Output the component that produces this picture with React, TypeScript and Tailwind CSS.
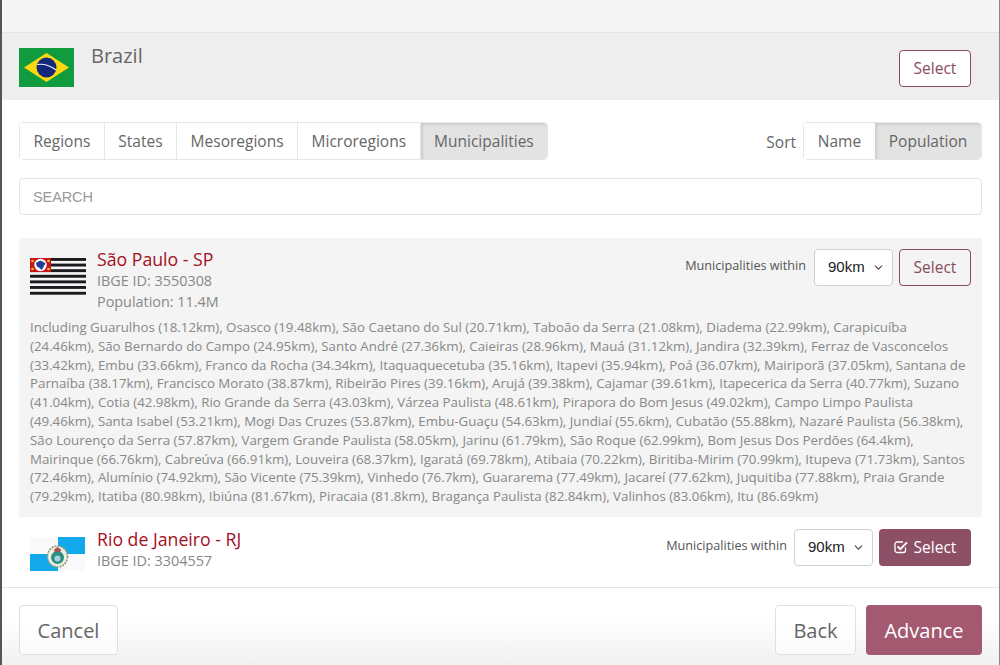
import { ChevronDown } from "lucide-react";

const tabs = ["Regions", "States", "Mesoregions", "Microregions", "Municipalities"];

const nearby =
  "Including Guarulhos (18.12km), Osasco (19.48km), São Caetano do Sul (20.71km), Taboão da Serra (21.08km), Diadema (22.99km), Carapicuíba (24.46km), São Bernardo do Campo (24.95km), Santo André (27.36km), Caieiras (28.96km), Mauá (31.12km), Jandira (32.39km), Ferraz de Vasconcelos (33.42km), Embu (33.66km), Franco da Rocha (34.34km), Itaquaquecetuba (35.16km), Itapevi (35.94km), Poá (36.07km), Mairiporã (37.05km), Santana de Parnaíba (38.17km), Francisco Morato (38.87km), Ribeirão Pires (39.16km), Arujá (39.38km), Cajamar (39.61km), Itapecerica da Serra (40.77km), Suzano (41.04km), Cotia (42.98km), Rio Grande da Serra (43.03km), Várzea Paulista (48.61km), Pirapora do Bom Jesus (49.02km), Campo Limpo Paulista (49.46km), Santa Isabel (53.21km), Mogi Das Cruzes (53.87km), Embu-Guaçu (54.63km), Jundiaí (55.6km), Cubatão (55.88km), Nazaré Paulista (56.38km), São Lourenço da Serra (57.87km), Vargem Grande Paulista (58.05km), Jarinu (61.79km), São Roque (62.99km), Bom Jesus Dos Perdões (64.4km), Mairinque (66.76km), Cabreúva (66.91km), Louveira (68.37km), Igaratá (69.78km), Atibaia (70.22km), Biritiba-Mirim (70.99km), Itupeva (71.73km), Santos (72.46km), Alumínio (74.92km), São Vicente (75.39km), Vinhedo (76.7km), Guararema (77.49km), Jacareí (77.62km), Juquitiba (77.88km), Praia Grande (79.29km), Itatiba (80.98km), Ibiúna (81.67km), Piracaia (81.8km), Bragança Paulista (82.84km), Valinhos (83.06km), Itu (86.69km)";

function BrazilFlag() {
  return (
    <svg width="55" height="39" viewBox="0 0 55 39" className="shrink-0">
      <rect width="55" height="39" fill="#0f9b3e" />
      <polygon points="5,19.5 27.5,5 50,19.5 27.5,34" fill="#fcd80f" />
      <circle cx="27.5" cy="19.5" r="10" fill="#13287a" />
      <path d="M18 16.5 Q28 15 37 22" stroke="#e8edf2" strokeWidth="1.2" fill="none" />
    </svg>
  );
}

function SaoPauloFlag() {
  const stripes = [0, 5.6, 11.2, 16.8, 22.4, 28, 33.8];
  return (
    <svg width="56" height="37" viewBox="0 0 56 37" className="shrink-0">
      {stripes.map((y) => (
        <rect key={y} y={y} width="56" height="2.9" fill="#1b1b1f" />
      ))}
      <rect width="21" height="14" fill="#c8121c" />
      <circle cx="10.5" cy="7" r="6.2" fill="#fff" />
      <path d="M6 4.8 L10.5 2.4 L15.5 5.2 L14 8 L11.8 12 L9.5 10 L6.8 8.2 Z" fill="#1f3f94" />
      <circle cx="2.5" cy="3" r="1.3" fill="#f5c518" />
      <circle cx="18.5" cy="3" r="1.3" fill="#f5c518" />
      <circle cx="2.5" cy="11" r="1.3" fill="#f5c518" />
      <circle cx="18.5" cy="11" r="1.3" fill="#f5c518" />
    </svg>
  );
}

function RioFlag() {
  return (
    <svg width="55" height="34" viewBox="0 0 55 34" className="shrink-0">
      <rect width="55" height="34" fill="#fafafa" />
      <rect x="28" width="27" height="17" fill="#12a8ec" />
      <rect y="17" width="28" height="17" fill="#12a8ec" />
      <ellipse cx="27.5" cy="19.5" rx="10" ry="10.5" fill="#eef0e6" stroke="#8f9c78" strokeWidth="1.6" strokeDasharray="2 1" />
      <circle cx="27.5" cy="20.5" r="6.5" fill="#2f8d7d" />
      <circle cx="27.5" cy="21.5" r="3" fill="#a6d6e6" />
      <path d="M23.5 13 L27.5 10 L31.5 13 L30 15 L25 15 Z" fill="#a9545c" />
    </svg>
  );
}

function CheckSquare() {
  return (
    <svg width="15" height="14" viewBox="0 0 15 14" fill="none" stroke="currentColor" className="shrink-0">
      <path d="M11.5 7.5 V10.5 A2 2 0 0 1 9.5 12.5 H3 A2 2 0 0 1 1 10.5 V4 A2 2 0 0 1 3 2 H9" strokeWidth="1.3" />
      <path d="M3.6 6.4 L6.3 9.1 L13 2.4" strokeWidth="2" />
    </svg>
  );
}

function DistanceSelect() {
  return (
    <div className="flex h-[37px] w-[79px] items-center justify-between rounded border border-[#d0d0d0] bg-white pr-[7px] pl-[13px] font-['Liberation_Sans',sans-serif] text-[15px] text-[#222]">
      90km
      <ChevronDown size={13} strokeWidth={2} className="text-[#444]" />
    </div>
  );
}

function OutlineSelect({ transparent }: { transparent?: boolean }) {
  return (
    <button
      className={`h-[37px] w-[72px] rounded border border-[#8a4a60] text-[15.5px] text-[#8a4a60] ${
        transparent ? "bg-transparent" : "bg-white"
      }`}
    >
      Select
    </button>
  );
}

export default function App() {
  return (
    <div className="flex h-[665px] w-[1000px] flex-col overflow-hidden border-r border-l-2 border-r-[#888] border-l-[#555] bg-white font-['Open_Sans',sans-serif] text-[#666]">
      <div className="h-[33px] shrink-0 border-b border-[#e3e3e3] bg-[#f5f5f5]" />

      <div className="flex h-[67px] shrink-0 items-start justify-between bg-[#eeeeee] pr-[28px] pl-[17px]">
        <div className="mt-[15px] flex items-start gap-[17px]">
          <BrazilFlag />
          <span className="-mt-[5px] text-[20px] leading-[26px] text-[#666]">Brazil</span>
        </div>
        <div className="mt-[17px]">
          <OutlineSelect />
        </div>
      </div>

      <div className="flex shrink-0 items-start justify-between pt-[22px] pr-[17px] pl-[17px]">
        <div className="flex h-[38px] rounded border border-[#e6e6e6] text-[15.5px]">
          {tabs.map((tab, i) => (
            <div
              key={tab}
              className={`flex items-center px-[13.5px] pt-[1px] ${
                i === tabs.length - 1
                  ? "rounded-r bg-[#e3e3e3] shadow-[inset_2px_2px_3px_rgba(0,0,0,0.1)]"
                  : "border-r border-[#e6e6e6] bg-white"
              }`}
            >
              {tab}
            </div>
          ))}
        </div>
        <div className="flex items-center gap-[7px]">
          <span className="mt-[4px] text-[15.5px]">Sort</span>
          <div className="flex h-[38px] rounded border border-[#e6e6e6] text-[15.5px]">
            <div className="flex w-[71px] items-center justify-center bg-white pt-[1px]">Name</div>
            <div className="flex w-[106px] items-center justify-center rounded-r bg-[#e3e3e3] pt-[1px] shadow-[inset_2px_2px_3px_rgba(0,0,0,0.1)]">
              Population
            </div>
          </div>
        </div>
      </div>

      <div className="mt-[18px] mr-[17px] ml-[17px] flex h-[37px] shrink-0 items-center rounded border border-[#e4e4e4] px-[13px] pt-[2px] font-['Liberation_Sans',sans-serif] text-[14.5px] tracking-[-0.1px] text-[#999]">
        SEARCH
      </div>

      <div className="min-h-0 flex-1 overflow-hidden pt-[23px]">
        <div className="mr-[17px] ml-[17px] bg-[#f3f4f3] px-[11px] pt-[11px] pb-[11px]">
          <div className="flex items-start justify-between">
            <div className="flex items-start gap-[11px]">
              <div className="mt-[9px]">
                <SaoPauloFlag />
              </div>
              <div>
                <div className="text-[17.7px] leading-[20px] text-[#a50e1d]">São Paulo - SP</div>
                <div className="mt-[2px] text-[14.4px] leading-[20px] text-[#888]">IBGE ID: 3550308</div>
                <div className="mt-[1px] text-[14.4px] leading-[20px] text-[#888]">Population: 11.4M</div>
              </div>
            </div>
            <div className="flex items-start">
              <span className="mt-[7px] mr-[8px] text-[12.65px] leading-[18px] text-[#555]">Municipalities within</span>
              <DistanceSelect />
              <div className="ml-[6px]">
                <OutlineSelect transparent />
              </div>
            </div>
          </div>
          <p className="mt-[6px] text-[13.3px] leading-[18.8px] text-[#888]">{nearby}</p>
        </div>

        <div className="mr-[28px] ml-[28px] flex items-start justify-between pt-[12px]">
          <div className="flex items-start gap-[12px]">
            <div className="mt-[8px]">
              <RioFlag />
            </div>
            <div>
              <div className="text-[17.7px] leading-[20px] text-[#a50e1d]">Rio de Janeiro - RJ</div>
              <div className="mt-[2px] text-[14.4px] leading-[20px] text-[#888]">IBGE ID: 3304557</div>
            </div>
          </div>
          <div className="flex items-start">
            <span className="mt-[7px] mr-[7px] text-[12.65px] leading-[18px] text-[#555]">Municipalities within</span>
            <DistanceSelect />
            <button className="ml-[6px] flex h-[37px] w-[92px] items-center justify-center gap-[5px] rounded bg-[#8d4f66] text-[15.5px] text-white">
              <CheckSquare />
              Select
            </button>
          </div>
        </div>
      </div>

      <div className="flex h-[78px] shrink-0 items-start justify-between border-t border-[#e3e3e3] bg-gradient-to-b from-white from-40% to-[#f0f0f0] pt-[17px] pr-[17px] pl-[17px] text-[20px]">
        <button className="h-[50px] w-[99px] rounded border border-[#e0e0e0] bg-white/60 pt-[2px]">Cancel</button>
        <div className="flex gap-[10px]">
          <button className="h-[50px] w-[81px] rounded border border-[#e0e0e0] bg-white/60 pt-[2px]">Back</button>
          <button className="h-[50px] w-[116px] rounded bg-[#a35a70] pt-[2px] text-white">Advance</button>
        </div>
      </div>
    </div>
  );
}
